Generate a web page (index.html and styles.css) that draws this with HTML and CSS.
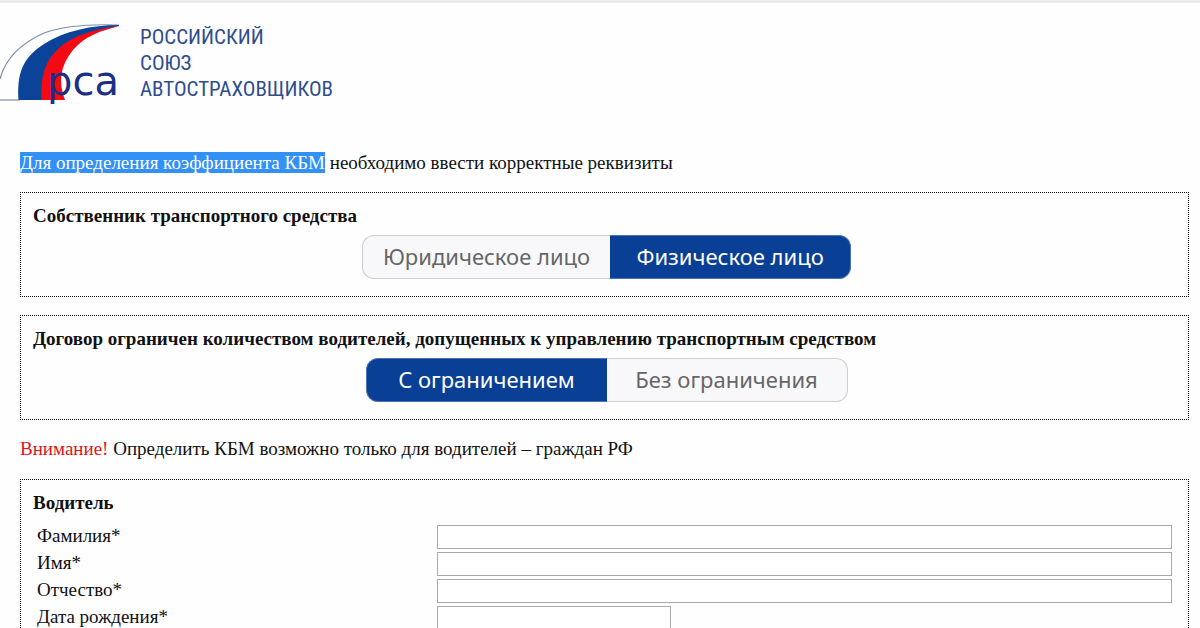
FILE: index.html
```html
<!DOCTYPE html>
<html lang="ru">
<head>
<meta charset="utf-8">
<title>Определение КБМ</title>
<link rel="stylesheet" href="styles.css">
</head>
<body>
<header class="header">
  <svg class="logo" viewBox="0 0 128 84" width="128" height="84" aria-label="РСА" role="img">
    <path d="M0 59C6 36 24 22 44 13C66 5 92 4 119 5" fill="none" stroke="#7c8fb0" stroke-width="1.2"/>
    <path d="M0 80H20" stroke="#7c8fb0" stroke-width="1.2"/>
    <path d="M119 5C92 5 64 11 44 24C22 38 17 54 18.500 80H46L56 40C70 24 90 12 119 6Z" fill="#0b4398"/>
    <path d="M119 6C96 9 72 15 57 30C43 44 41 60 41.500 80H65C58 62 60 46 73 30C85 16 100 11 119 6Z" fill="#f40a12"/>
    <text class="logo-text" x="47" y="75">рса</text>
  </svg>
  <div class="org">Российский<br>Союз<br>Автостраховщиков</div>
</header>
<main class="main">
  <p class="intro"><mark class="selected">Для определения коэффициента КБМ</mark> необходимо ввести корректные реквизиты</p>
  <section class="box">
    <h2 class="title">Собственник транспортного средства</h2>
    <div class="toggle">
      <button class="option" type="button" aria-pressed="false">Юридическое лицо</button>
      <button class="option active" type="button" aria-pressed="true">Физическое лицо</button>
    </div>
  </section>
  <section class="box">
    <h2 class="title">Договор ограничен количеством водителей, допущенных к управлению транспортным средством</h2>
    <div class="toggle">
      <button class="option active" type="button" aria-pressed="true">С ограничением</button>
      <button class="option" type="button" aria-pressed="false">Без ограничения</button>
    </div>
  </section>
  <p class="notice"><span class="warn">Внимание!</span> Определить КБМ возможно только для водителей – граждан РФ</p>
  <section class="box">
    <h2 class="title">Водитель</h2>
    <form class="fields">
      <label class="label" for="surname">Фамилия*</label><input class="field" id="surname" type="text">
      <label class="label" for="name">Имя*</label><input class="field" id="name" type="text">
      <label class="label" for="patronymic">Отчество*</label><input class="field" id="patronymic" type="text">
      <label class="label" for="birth">Дата рождения*</label><input class="field short" id="birth" type="text">
    </form>
  </section>
</main>
</body>
</html>
```
FILE: styles.css
```css
* { box-sizing: border-box; }
body {
  margin: 0;
  border-top: 3px solid #ececec;
  background: #fefefe;
  color: #111;
  font: 19px/22px "Liberation Serif", "Times New Roman", serif;
}
.header {
  display: flex;
  align-items: flex-start;
  gap: 12px;
  padding-top: 17px;
}
.logo { display: block; flex: none; }
.logo-text {
  fill: #1b2f86;
  font: 40px "DejaVu Sans", sans-serif;
}
.org {
  color: #2f4d8c;
  font: 21px/26px "Roboto Condensed", "Open Sans Condensed", "Noto Sans CJK SC", sans-serif;
  text-transform: uppercase;
  padding-top: 4px;
}
.main { padding: 48px 11px 0 20px; }
.intro, .notice { margin: 0; }
.intro, .box { margin-bottom: 18px; }
.selected { background: #3390f5; color: #fff; }
.warn { color: #e0141c; }
.box {
  border: 1px dotted #000;
  padding: 12px 12px 17px;
}
.title { margin: 0 0 8px; font-size: 19px; line-height: 22px; }
.toggle { display: flex; justify-content: center; padding-left: 4px; }
.option {
  height: 44px;
  min-width: 241px;
  padding: 0 20px 2px;
  border: 1px solid #ccccd2;
  background: #f8f8fb;
  color: #666;
  font: 22px "Noto Sans", Verdana, sans-serif;
}
.option:first-child { border-radius: 12px 0 0 12px; border-right: 0; }
.option:last-child { border-radius: 0 12px 12px 0; border-left: 0; }
.option.active { background: #0a3f96; border-color: #4d72b4; color: #fff; }
.notice { margin-bottom: 19px; }
.fields {
  display: grid;
  grid-template-columns: 400px 1fr;
  gap: 3px 0;
  padding: 3px 4px 0;
}
.label { line-height: 22px; }
.field {
  width: 100%;
  height: 24px;
  border: 1px solid #a9a9a9;
  background: #fff;
  font: inherit;
}
.short { width: 234px; }
```
